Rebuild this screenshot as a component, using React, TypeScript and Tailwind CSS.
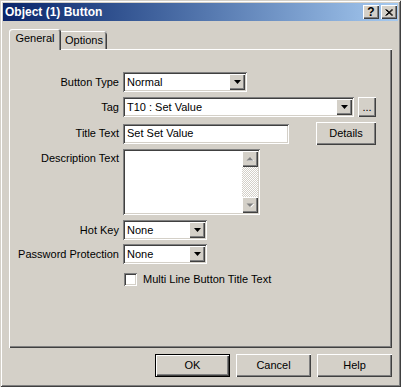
import React from "react";

// classic 3D borders drawn with inset shadows so they take no layout space
const raised =
  "shadow-[inset_1px_1px_#ffffff,inset_-1px_-1px_#404040,inset_-2px_-2px_#808080]";
const sunken =
  "shadow-[inset_1px_1px_#808080,inset_-1px_-1px_#ffffff,inset_2px_2px_#404040,inset_-2px_-2px_#d4d0c8]";

function DropBtn() {
  return (
    <div className={`w-[16px] h-[16px] bg-[#d4d0c8] flex items-center justify-center ${raised}`}>
      <svg width="7" height="4" viewBox="0 0 7 4">
        <polygon points="0,0 7,0 3.5,4" fill="#000" />
      </svg>
    </div>
  );
}

function Combo({ w, value }: { w: string; value: string }) {
  return (
    <div className={`${w} h-[20px] bg-white flex items-center p-[2px] ${sunken}`}>
      <span className="flex-1 pl-[2px] leading-none">{value}</span>
      <DropBtn />
    </div>
  );
}

function ScrollArrow({ up }: { up?: boolean }) {
  return (
    <div className={`w-[16px] h-[16px] bg-[#d4d0c8] flex items-center justify-center ${raised}`}>
      <svg width="9" height="6" viewBox="0 0 9 6">
        {up ? (
          <>
            <polygon points="1.5,5 8.5,5 5,1.5" fill="#fff" />
            <polygon points="0.5,4.5 7.5,4.5 4,1" fill="#808080" />
          </>
        ) : (
          <>
            <polygon points="1.5,2 8.5,2 5,5.5" fill="#fff" />
            <polygon points="0.5,1.5 7.5,1.5 4,5" fill="#808080" />
          </>
        )}
      </svg>
    </div>
  );
}

function Btn({ label, def }: { label: string; def?: boolean }) {
  if (def) {
    return (
      <div className="w-[75px] h-[23px] border border-black flex">
        <div className={`flex-1 bg-[#d4d0c8] flex items-center justify-center ${raised}`}>{label}</div>
      </div>
    );
  }
  return (
    <div className={`w-[75px] h-[23px] bg-[#d4d0c8] flex items-center justify-center ${raised}`}>
      {label}
    </div>
  );
}

function Label({ text, top }: { text: string; top?: boolean }) {
  return (
    <span className={`w-[110px] shrink-0 text-right whitespace-nowrap ${top ? "self-start pt-[1px]" : ""}`}>
      {text}
    </span>
  );
}

export default function App() {
  return (
    <div
      className="w-[401px] h-[387px] bg-[#d4d0c8] p-[3px] flex flex-col text-[11px] text-black shadow-[inset_1px_1px_#d4d0c8,inset_-1px_-1px_#404040,inset_2px_2px_#ffffff,inset_-2px_-2px_#808080]"
      style={{ fontFamily: '"Liberation Sans", Arial, sans-serif' }}
    >
      {/* title bar */}
      <div className="h-[18px] flex items-center pl-[2px] pr-[1px] bg-gradient-to-r from-[#0a246a] to-[#a6caf0]">
        <span className="flex-1 text-white font-bold text-[12px] leading-none">Object (1) Button</span>
        <div className={`w-[16px] h-[14px] bg-[#d4d0c8] flex items-center justify-center font-bold text-[12px] leading-none ${raised}`}>
          ?
        </div>
        <div className={`ml-[2px] w-[16px] h-[14px] bg-[#d4d0c8] flex items-center justify-center ${raised}`}>
          <svg width="8" height="7" viewBox="0 0 8 7">
            <path d="M0.5 0.5 L7 6.5 M1.5 0.5 L8 6.5 M7 0.5 L0.5 6.5 M8 0.5 L1.5 6.5" stroke="#000" strokeWidth="1" fill="none" />
          </svg>
        </div>
      </div>

      {/* tabs */}
      <div className="mt-[8px] ml-[6px] h-[21px] flex items-end">
        <div className="relative z-10 w-[52px] h-[21px] bg-[#d4d0c8] rounded-t-[3px] flex items-center justify-center pb-[2px] shadow-[inset_1px_1px_#ffffff,inset_-1px_0_#404040,inset_-2px_0_#808080]">
          General
        </div>
        <div className="w-[46px] h-[18px] mb-[1px] bg-[#d4d0c8] rounded-tr-[3px] flex items-center justify-center shadow-[inset_0_1px_#ffffff,inset_-1px_0_#404040,inset_-2px_0_#808080]">
          Options
        </div>
      </div>

      {/* panel */}
      <div className={`-mt-[1px] ml-[6px] w-[383px] h-[299px] bg-[#d4d0c8] pt-[23px] flex flex-col ${raised}`}>
        <div className="h-[20px] flex items-center gap-[4px]">
          <Label text="Button Type" />
          <Combo w="w-[124px]" value="Normal" />
        </div>

        <div className="mt-[5px] h-[20px] flex items-center gap-[4px]">
          <Label text="Tag" />
          <Combo w="w-[231px]" value="T10 : Set Value" />
          <div className={`w-[18px] h-[20px] bg-[#d4d0c8] flex items-center justify-center ${raised}`}>...</div>
        </div>

        <div className="mt-[5px] h-[23px] flex items-center gap-[4px]">
          <Label text="Title Text" />
          <div className={`w-[166px] h-[20px] bg-white flex items-center pl-[4px] ${sunken}`}>Set Set Value</div>
          <div className={`ml-[23px] w-[60px] h-[23px] bg-[#d4d0c8] flex items-center justify-center ${raised}`}>
            Details
          </div>
        </div>

        <div className="mt-[4px] h-[66px] flex gap-[4px]">
          <Label text="Description Text" top />
          <div className={`w-[137px] h-[66px] flex p-[2px] ${sunken}`}>
            <div className="flex-1 bg-white" />
            <div className="w-[16px] flex flex-col">
              <ScrollArrow up />
              <div className="flex-1 bg-[image:repeating-conic-gradient(#ffffff_0%_25%,#d4d0c8_0%_50%)] bg-[length:2px_2px]" />
              <ScrollArrow />
            </div>
          </div>
        </div>

        <div className="mt-[5px] h-[20px] flex items-center gap-[4px]">
          <Label text="Hot Key" />
          <Combo w="w-[84px]" value="None" />
        </div>

        <div className="mt-[4px] h-[20px] flex items-center gap-[4px]">
          <Label text="Password Protection" />
          <Combo w="w-[84px]" value="None" />
        </div>

        <div className="mt-[9px] h-[13px] flex items-center">
          <div className="w-[115px] shrink-0" />
          <div className={`w-[13px] h-[13px] bg-white ${sunken}`} />
          <span className="ml-[6px] leading-none">Multi Line Button Title Text</span>
        </div>
      </div>

      {/* dialog buttons */}
      <div className="mt-[6px] ml-[6px] w-[383px] flex justify-end gap-[6px]">
        <Btn label="OK" def />
        <Btn label="Cancel" />
        <Btn label="Help" />
      </div>
    </div>
  );
}
